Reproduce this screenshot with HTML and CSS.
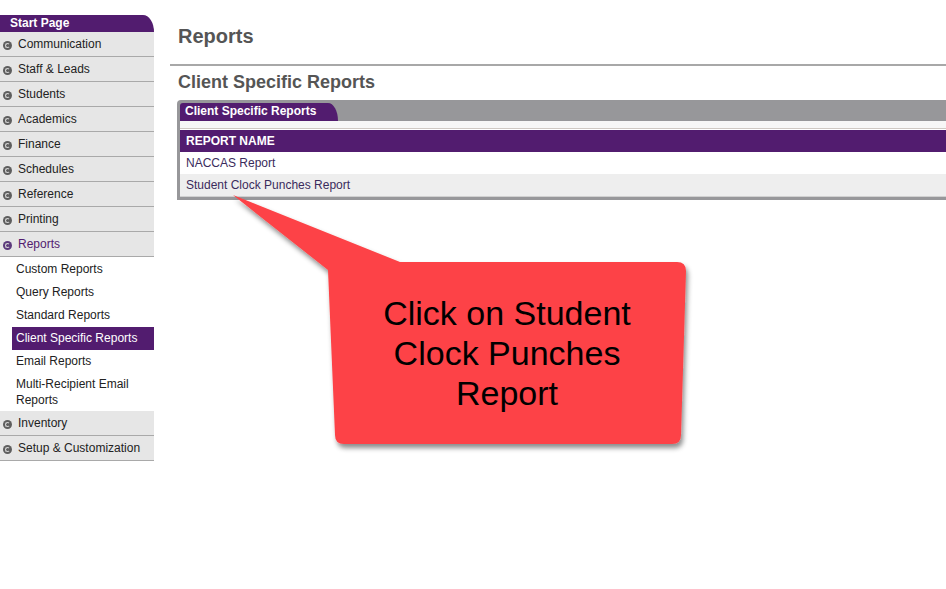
FILE: index.html
```html
<!DOCTYPE html>
<html>
<head>
    <title>Reports - Client Specific Reports</title>
    <link rel="stylesheet" href="styles.css">
</head>
<body>
<div class="page">
    <aside class="sidebar">
        <div class="side-head">Start Page</div>
        <a href="#" class="side-item"><span class="dot"></span>Communication</a>
        <a href="#" class="side-item"><span class="dot"></span>Staff &amp; Leads</a>
        <a href="#" class="side-item"><span class="dot"></span>Students</a>
        <a href="#" class="side-item"><span class="dot"></span>Academics</a>
        <a href="#" class="side-item"><span class="dot"></span>Finance</a>
        <a href="#" class="side-item"><span class="dot"></span>Schedules</a>
        <a href="#" class="side-item"><span class="dot"></span>Reference</a>
        <a href="#" class="side-item"><span class="dot"></span>Printing</a>
        <a href="#" class="side-item open"><span class="dot"></span>Reports</a>
        <div class="sub-list">
            <a href="#" class="sub-item">Custom Reports</a>
            <a href="#" class="sub-item">Query Reports</a>
            <a href="#" class="sub-item">Standard Reports</a>
            <a href="#" class="sub-item active">Client Specific Reports</a>
            <a href="#" class="sub-item">Email Reports</a>
            <a href="#" class="sub-item">Multi-Recipient Email Reports</a>
        </div>
        <a href="#" class="side-item"><span class="dot"></span>Inventory</a>
        <a href="#" class="side-item"><span class="dot"></span>Setup &amp; Customization</a>
    </aside>

    <main class="content">
        <h1>Reports</h1>
        <div class="rule"></div>
        <h2>Client Specific Reports</h2>
        <div class="panel">
            <div class="tab">Client Specific Reports</div>
            <div class="panel-body">
                <div class="strip"></div>
                <table>
                    <thead>
                    <tr><th>REPORT NAME</th></tr>
                    </thead>
                    <tbody>
                    <tr><td><a href="#">NACCAS Report</a></td></tr>
                    <tr class="alt"><td><a href="#">Student Clock Punches Report</a></td></tr>
                    </tbody>
                </table>
            </div>
        </div>
    </main>
</div>

<!-- callout pointing at the report link -->
<div class="callout">
    <svg width="480" height="270" viewBox="228 190 480 270">
        <defs>
            <filter id="shadow" x="-10%" y="-10%" width="120%" height="130%">
                <feDropShadow dx="2" dy="4" stdDeviation="2.5" flood-color="#000" flood-opacity="0.45"/>
            </filter>
        </defs>
        <path d="M233,195 L400,262 L677,262 Q686,262 686,271 L681,435 Q681,444 672,444 L344,444 Q335,444 335,435 L328,270 Z"
              fill="#fd4346" filter="url(#shadow)"/>
    </svg>
    <div class="callout-text">Click on Student<br>Clock Punches<br>Report</div>
</div>
</body>
</html>
```

FILE: styles.css
```css
body {
	margin: 0;
	background-color: #FFFFFF;
	font-family: "Liberation Sans", Arial, sans-serif;
	font-size: 12px;
	color: #222222;
}

a {
	text-decoration: none;
}

.page {
	display: flex;
	align-items: flex-start;
}

/* left menu */
.sidebar {
	width: 154px;
	flex-shrink: 0;
	padding-top: 15px;
	display: flex;
	flex-direction: column;
}

.side-head {
	height: 17px;
	line-height: 17px;
	background-color: #521c6f;
	color: #FFFFFF;
	font-weight: bold;
	padding-left: 10px;
	border-top-right-radius: 11px 17px;
}

.side-item {
	display: flex;
	align-items: center;
	height: 24px;
	background-color: #e6e6e6;
	border-bottom: 1px solid #a9a9a9;
	color: #222222;
	padding-left: 3px;
}

.side-item.open {
	color: #521c6f;
}

.dot {
	width: 9px;
	height: 9px;
	border-radius: 50%;
	background-color: #5e5e5e;
	margin-right: 6px;
	position: relative;
	top: 1px;
}

.dot::after {
	content: "";
	position: absolute;
	left: 2px;
	top: 2px;
	width: 3px;
	height: 3px;
	border: 1px solid #d4d4d4;
	border-right-color: transparent;
	border-radius: 50%;
}

.side-item.open .dot {
	background-color: #5c3a7c;
}

.sub-list {
	display: flex;
	flex-direction: column;
	background-color: #FFFFFF;
	padding-top: 1px;
}

.sub-item {
	margin-left: 12px;
	padding: 3px 4px;
	line-height: 16px;
	min-height: 17px;
	color: #222222;
}

.sub-item.active {
	background-color: #521c6f;
	color: #FFFFFF;
}

/* main area */
.content {
	flex: 1;
	padding-top: 24px;
	padding-left: 16px;
}

h1 {
	margin: 0 0 0 8px;
	font-size: 20px;
	line-height: 24px;
	color: #555555;
}

.rule {
	height: 2px;
	background-color: #a8a8a8;
	margin-top: 16px;
}

h2 {
	margin: 5px 0 0 8px;
	font-size: 18px;
	line-height: 22px;
	color: #555555;
}

.panel {
	margin: 7px 0 0 7px;
	background-color: #97979a;
	border-top-left-radius: 4px;
	padding: 3px 0 3px 3px;
}

.tab {
	width: 153px;
	height: 18px;
	line-height: 17px;
	background-color: #521c6f;
	color: #FFFFFF;
	font-weight: bold;
	padding-left: 5px;
	border-top-left-radius: 3px;
	border-top-right-radius: 10px 18px;
}

.panel-body {
	background-color: #FFFFFF;
}

.strip {
	height: 7px;
	background-color: #f7f7f7;
	border-bottom: 1px solid #cfc9c4;
}

table {
	width: 100%;
	border-collapse: collapse;
}

th {
	background-color: #521c6f;
	color: #FFFFFF;
	text-align: left;
	font-weight: bold;
	height: 22px;
	padding: 0 6px;
	border-top: 1px solid #FFFFFF;
}

td {
	height: 22px;
	padding: 0 6px;
}

td a {
	color: #3a2b5c;
}

tr.alt td {
	background-color: #eeeeee;
	border-bottom: 1px solid #d0d0d0;
}

/* callout */
.callout {
	position: absolute;
	left: 228px;
	top: 190px;
	width: 480px;
	height: 270px;
	pointer-events: none;
}

.callout svg {
	display: block;
}

.callout-text {
	position: absolute;
	left: 100px;
	top: 103px;
	width: 358px;
	text-align: center;
	font-size: 34px;
	line-height: 40px;
	color: #000000;
}
```
